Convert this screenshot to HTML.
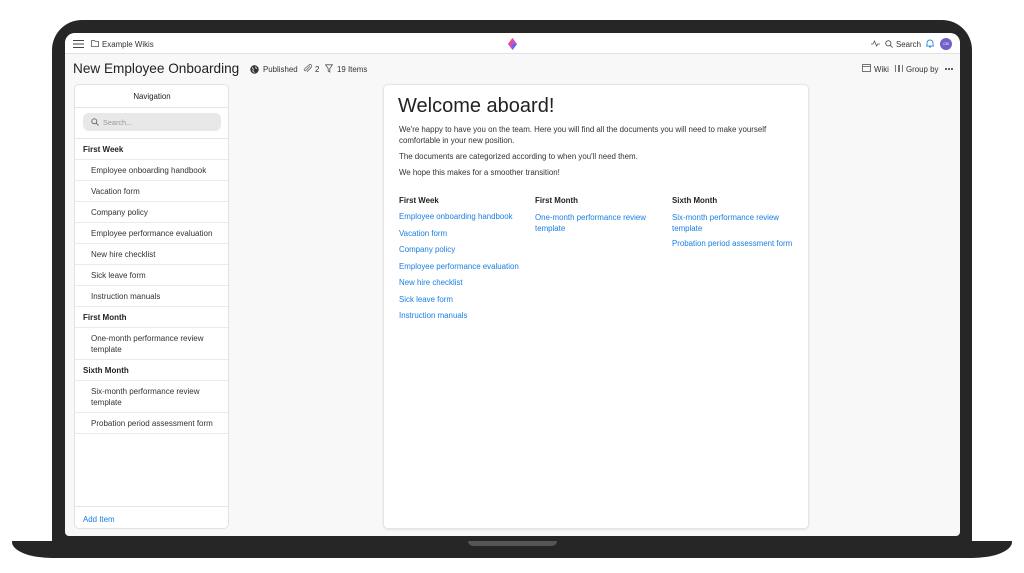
<!DOCTYPE html>
<html><head><meta charset="utf-8"><style>
*{margin:0;padding:0;box-sizing:border-box}
body{width:1024px;height:573px;background:#fff;position:relative;overflow:hidden;font-family:"Liberation Sans",sans-serif;color:#333}
.a{position:absolute;white-space:nowrap}
.bezel{position:absolute;left:52px;top:20px;width:920px;height:526px;background:#262626;border-radius:30px 30px 6px 6px}
.screen{position:absolute;left:65px;top:33px;width:895px;height:503px;background:#f8f8f8;border-radius:10px 10px 4px 4px;overflow:hidden}
.base{position:absolute;left:12px;top:541px;width:1000px;height:17px;background:#262626;border-radius:0 0 40px 40px/0 0 16px 16px}
.notch{position:absolute;left:468px;top:541px;width:89px;height:5px;background:#555;border-radius:0 0 8px 8px}
.s{font-size:7.9px}
.nav .it{position:absolute;left:0;width:154px;border-bottom:1px solid #eaeaea;font-size:8px;color:#333;padding-left:16px}
.nav .h{padding-left:8px;font-weight:bold;color:#222}
.lk{color:#1a7fe0;font-size:7.9px;position:absolute;white-space:nowrap}
</style></head><body>
<div class="bezel"></div>
<div class="base"></div><div class="notch"></div>
<div class="screen">
  <div class="a" style="left:0;top:0;width:895px;height:21px;background:#fff;border-bottom:1px solid #e2e2e2"></div>
  <div class="a" style="left:8px;top:7px;width:11px;height:1.3px;background:#444;box-shadow:0 3.5px 0 #444,0 7px 0 #444"></div>
  <svg class="a" style="left:26px;top:7px" width="8" height="7" viewBox="0 0 8 7"><path d="M.5 .5h3l1 1h3v5h-7z" fill="none" stroke="#555" stroke-width=".8"/></svg>
  <div class="a s" style="left:37px;top:7px;color:#333">Example Wikis</div>
  <svg class="a" style="left:443px;top:5px" width="9" height="12" viewBox="0 0 9 12"><path d="M4.5 0L9 6 4.5 12 0 6z" fill="#c54bd8"/><path d="M4.5 6L9 6 4.5 12z" fill="#5a6be8"/><path d="M0 6h4.5L4.5 0z" fill="#f0506e"/></svg>
  <svg class="a" style="left:806px;top:7px" width="9" height="7" viewBox="0 0 9 7"><path d="M0 4h2l1.5-3 2 5 1.2-2H9" fill="none" stroke="#555" stroke-width=".8"/></svg>
  <svg class="a" style="left:820px;top:7px" width="8" height="8" viewBox="0 0 8 8"><circle cx="3.3" cy="3.3" r="2.6" fill="none" stroke="#555" stroke-width=".9"/><path d="M5.2 5.2L7.6 7.6" stroke="#555" stroke-width=".9"/></svg>
  <div class="a s" style="left:831px;top:7px;color:#333">Search</div>
  <svg class="a" style="left:861px;top:6px" width="8" height="9" viewBox="0 0 8 9"><path d="M1 6.5V4a3 3 0 016 0v2.5l.6.6H.4zM3 8h2" fill="none" stroke="#2b8be6" stroke-width=".9"/></svg>
  <div class="a" style="left:875px;top:5px;width:12px;height:12px;border-radius:50%;background:#7060c8;color:#fff;font-size:4px;text-align:center;line-height:12px">CB</div>

  <div class="a" style="left:8px;top:28px;font-size:13.6px;color:#222">New Employee Onboarding</div>
  <svg class="a" style="left:185px;top:32px" width="9" height="9" viewBox="0 0 9 9"><circle cx="4.5" cy="4.5" r="4.2" fill="#333"/><path d="M2 2.5c1 .5 1.5 1.5 1 2.5s.5 2 1.5 2.5M6 1.5c-.5 1-.2 2 .8 2.3" stroke="#fff" stroke-width=".8" fill="none"/></svg>
  <div class="a s" style="left:198px;top:32px">Published</div>
  <svg class="a" style="left:238px;top:31px" width="9" height="9" viewBox="0 0 9 9"><path d="M7 2L3 6.5a1 1 0 01-1.5-1.5L6 1a1.6 1.6 0 012.3 2.3L4 7.8" fill="none" stroke="#666" stroke-width=".8"/></svg>
  <div class="a s" style="left:250px;top:32px">2</div>
  <svg class="a" style="left:260px;top:31px" width="8" height="9" viewBox="0 0 8 9"><path d="M.5 .8h7L4.8 4.5v3.5L3.2 7V4.5z" fill="none" stroke="#555" stroke-width=".8"/></svg>
  <div class="a s" style="left:272px;top:32px">19 Items</div>
  <svg class="a" style="left:797px;top:31px" width="9" height="8" viewBox="0 0 9 8"><rect x=".5" y=".5" width="8" height="7" fill="none" stroke="#555" stroke-width=".8"/><path d="M.5 2.5h8" stroke="#555" stroke-width=".8"/></svg>
  <div class="a s" style="left:809px;top:32px">Wiki</div>
  <div class="a" style="left:830px;top:32px;width:8px;height:7px;border-left:1px solid #777;border-right:1px solid #777"><div style="margin-left:2px;width:2px;height:7px;border-left:1px solid #777;border-right:1px solid #777"></div></div>
  <div class="a s" style="left:841px;top:32px">Group by</div>
  <div class="a" style="left:880px;top:35px;width:2px;height:2px;background:#333;border-radius:50%;box-shadow:3px 0 0 #333,6px 0 0 #333"></div>

  <div class="a nav" style="left:9px;top:51px;width:155px;height:445px;background:#fff;border:1px solid #e2e2e2;border-radius:5px;overflow:hidden">
    <div class="a" style="left:0;top:0;width:154px;height:23px;border-bottom:1px solid #e6e6e6;text-align:center;font-size:7.9px;line-height:23px;color:#222">Navigation</div>
    <div class="a" style="left:8px;top:28px;width:138px;height:18px;background:#e8e8e8;border-radius:6px"></div>
    <svg class="a" style="left:16px;top:33px" width="8" height="8" viewBox="0 0 8 8"><circle cx="3.3" cy="3.3" r="2.5" fill="none" stroke="#666" stroke-width=".9"/><path d="M5.2 5.2L7.5 7.5" stroke="#666" stroke-width=".9"/></svg>
    <div class="a" style="left:28px;top:33px;font-size:7.3px;color:#999">Search...</div>
    <div class="a" style="left:0;top:53px;width:154px;border-top:1px solid #e6e6e6"></div>
    <div class="it h" style="top:54px;height:21px;line-height:21px">First Week</div>
    <div class="it" style="top:75px;height:21px;line-height:21px">Employee onboarding handbook</div>
    <div class="it" style="top:96px;height:21px;line-height:21px">Vacation form</div>
    <div class="it" style="top:117px;height:21px;line-height:21px">Company policy</div>
    <div class="it" style="top:138px;height:21px;line-height:21px">Employee performance evaluation</div>
    <div class="it" style="top:159px;height:21px;line-height:21px">New hire checklist</div>
    <div class="it" style="top:180px;height:21px;line-height:21px">Sick leave form</div>
    <div class="it" style="top:201px;height:21px;line-height:21px">Instruction manuals</div>
    <div class="it h" style="top:222px;height:21px;line-height:21px">First Month</div>
    <div class="it" style="top:243px;height:32px;line-height:11px;padding-top:5px">One-month performance review<br>template</div>
    <div class="it h" style="top:275px;height:21px;line-height:21px">Sixth Month</div>
    <div class="it" style="top:296px;height:32px;line-height:11px;padding-top:5px">Six-month performance review<br>template</div>
    <div class="it" style="top:328px;height:21px;line-height:21px">Probation period assessment form</div>
    <div class="a" style="left:0;top:421px;width:154px;border-top:1px solid #e6e6e6"></div>
    <div class="lk" style="left:8px;top:430px">Add Item</div>
  </div>

  <div class="a" style="left:318px;top:51px;width:426px;height:445px;background:#fff;border:1px solid #e4e4e4;border-radius:5px;box-shadow:0 1px 2px rgba(0,0,0,.08)"></div>
  <div class="a" style="left:333px;top:62px;font-size:20px;color:#222">Welcome aboard!</div>
  <div class="a s" style="left:334px;top:91px;line-height:11px;color:#333">We're happy to have you on the team. Here you will find all the documents you will need to make yourself<br>comfortable in your new position.</div>
  <div class="a s" style="left:334px;top:119px;color:#333">The documents are categorized according to when you'll need them.</div>
  <div class="a s" style="left:334px;top:135px;color:#333">We hope this makes for a smoother transition!</div>
  <div class="a s" style="left:334px;top:163px;font-weight:bold;color:#222">First Week</div>
  <div class="a s" style="left:470px;top:163px;font-weight:bold;color:#222">First Month</div>
  <div class="a s" style="left:607px;top:163px;font-weight:bold;color:#222">Sixth Month</div>
  <div class="lk" style="left:334px;top:179px">Employee onboarding handbook</div>
  <div class="lk" style="left:334px;top:196px">Vacation form</div>
  <div class="lk" style="left:334px;top:212px">Company policy</div>
  <div class="lk" style="left:334px;top:229px">Employee performance evaluation</div>
  <div class="lk" style="left:334px;top:245px">New hire checklist</div>
  <div class="lk" style="left:334px;top:262px">Sick leave form</div>
  <div class="lk" style="left:334px;top:278px">Instruction manuals</div>
  <div class="lk" style="left:470px;top:179px;line-height:11px">One-month performance review<br>template</div>
  <div class="lk" style="left:607px;top:179px;line-height:11px">Six-month performance review<br>template</div>
  <div class="lk" style="left:607px;top:206px">Probation period assessment form</div>
</div>
</body></html>
